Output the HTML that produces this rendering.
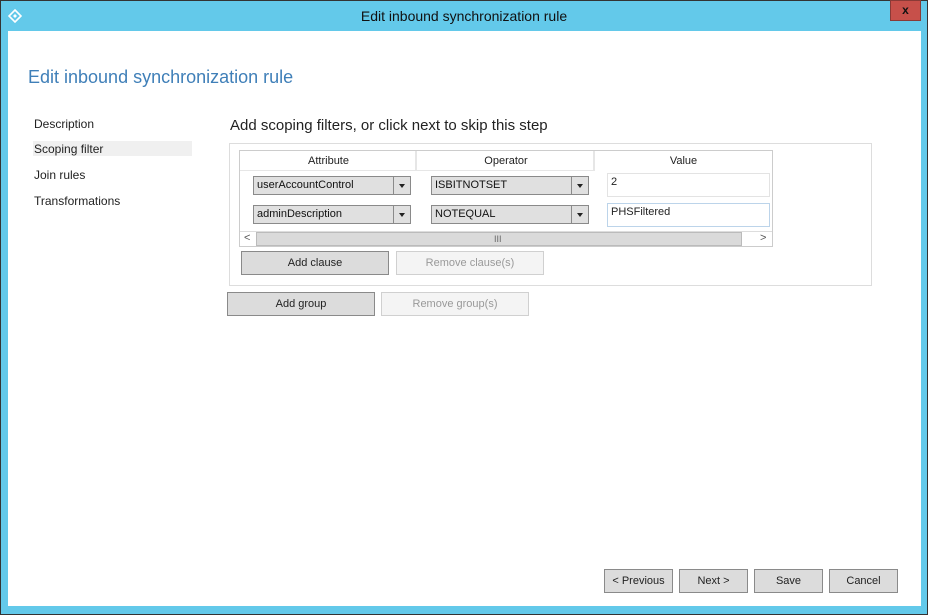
<!DOCTYPE html><html><head><style>
*{box-sizing:border-box;margin:0;padding:0}
body{width:928px;height:615px;position:relative;background:#63c9ea;font-family:"Liberation Sans",sans-serif;overflow:hidden}
.a{position:absolute}
.t{font-size:11px;color:#222;white-space:nowrap}
.btn{position:absolute;background:#dcdcdc;border:1px solid #8a8a8a;font-size:11px;color:#222;text-align:center;line-height:22px}
.dis{background:#f4f4f4;border-color:#d0d0d0;color:#999}
.cb{position:absolute;background:#e0e0e0;border:1px solid #8a8a8a;font-size:11px;line-height:17px;padding-left:3px;color:#111}
.cb i{position:absolute;right:0;top:0;width:17px;height:17px;border-left:1px solid #8a8a8a}
.cb i:after{content:"";position:absolute;left:5px;top:7px;border:3.5px solid transparent;border-top:4px solid #222}
</style></head><body>
<div class="a" style="left:0;top:0;width:928px;height:615px;border:1px solid #333"></div>
<svg class="a" style="left:8px;top:9px" width="14" height="14" viewBox="0 0 14 14"><path d="M7 1L13 7L7 13L1 7Z" fill="none" stroke="#fff" stroke-width="1.6"/><path d="M7 5L9 7L7 9L5 7Z" fill="#fff"/></svg>
<div class="a" style="left:0;width:928px;top:8px;text-align:center;font-size:14px;color:#111">Edit inbound synchronization rule</div>
<div class="a" style="left:890px;top:0;width:31px;height:21px;background:#c7504a;border:1px solid #8a3a36;color:#111;font-size:12px;font-weight:bold;text-align:center;line-height:18px">x</div>
<div class="a" style="left:8px;top:31px;width:913px;height:575px;background:#fff"></div>
<div class="a" style="left:28px;top:67px;font-size:18px;color:#3f7fb8">Edit inbound synchronization rule</div>
<div class="a" style="left:33px;top:141px;width:159px;height:15px;background:#f0f0f0"></div>
<div class="a t" style="left:34px;top:117px;font-size:12px">Description</div>
<div class="a t" style="left:34px;top:142px;font-size:12px">Scoping filter</div>
<div class="a t" style="left:34px;top:168px;font-size:12px">Join rules</div>
<div class="a t" style="left:34px;top:194px;font-size:12px">Transformations</div>
<div class="a t" style="left:230px;top:117px;font-size:15px">Add scoping filters, or click next to skip this step</div>
<div class="a" style="left:229px;top:143px;width:643px;height:143px;border:1px solid #ddd"></div>
<div class="a" style="left:239px;top:150px;width:534px;height:97px;border:1px solid #ccc"></div>
<div class="a" style="left:240px;top:151px;width:177px;height:20px;border-right:2px solid #e6e6e6;border-bottom:1px solid #e6e6e6"></div>
<div class="a" style="left:417px;top:151px;width:178px;height:20px;border-right:2px solid #e6e6e6;border-bottom:1px solid #e6e6e6"></div>
<div class="a t" style="left:240px;width:177px;top:155px;text-align:center">Attribute</div>
<div class="a t" style="left:417px;width:178px;top:155px;text-align:center">Operator</div>
<div class="a t" style="left:595px;width:177px;top:155px;text-align:center">Value</div>
<div class="cb" style="left:253px;top:176px;width:158px;height:19px">userAccountControl<i></i></div>
<div class="cb" style="left:431px;top:176px;width:158px;height:19px">ISBITNOTSET<i></i></div>
<div class="cb" style="left:253px;top:205px;width:158px;height:19px">adminDescription<i></i></div>
<div class="cb" style="left:431px;top:205px;width:158px;height:19px">NOTEQUAL<i></i></div>
<div class="a t" style="left:607px;top:173px;width:163px;height:24px;border:1px solid #e3e3e3;padding:2px 3px">2</div>
<div class="a t" style="left:607px;top:203px;width:163px;height:24px;border:1px solid #bcd4ea;padding:2px 3px">PHSFiltered</div>
<div class="a" style="left:240px;top:231px;width:532px;height:15px;background:#fff;border-top:1px solid #ddd"></div>
<div class="a t" style="left:244px;top:232px;color:#555">&lt;</div>
<div class="a" style="left:256px;top:232px;width:486px;height:14px;background:#dadada;border:1px solid #bbb"></div>
<div class="a t" style="left:494px;top:234px;color:#666;font-size:9px">III</div>
<div class="a t" style="left:760px;top:232px;color:#555">&gt;</div>
<div class="btn" style="left:241px;top:251px;width:148px;height:24px">Add clause</div>
<div class="btn dis" style="left:396px;top:251px;width:148px;height:24px">Remove clause(s)</div>
<div class="btn" style="left:227px;top:292px;width:148px;height:24px">Add group</div>
<div class="btn dis" style="left:381px;top:292px;width:148px;height:24px">Remove group(s)</div>
<div class="btn" style="left:604px;top:569px;width:69px;height:24px">&lt; Previous</div>
<div class="btn" style="left:679px;top:569px;width:69px;height:24px">Next &gt;</div>
<div class="btn" style="left:754px;top:569px;width:69px;height:24px">Save</div>
<div class="btn" style="left:829px;top:569px;width:69px;height:24px">Cancel</div>
</body></html>
